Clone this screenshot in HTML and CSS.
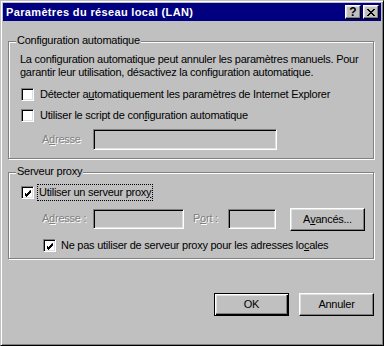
FILE: index.html
```html
<!DOCTYPE html>
<html lang="fr">
<head>
<meta charset="utf-8">
<title>Paramètres du réseau local (LAN)</title>
<link rel="stylesheet" href="styles.css">
</head>
<body>
<div class="window">
  <div class="titlebar">
    <span class="title">Paramètres du réseau local (LAN)</span>
    <div class="tbtns">
      <span class="tbtn help">?</span>
      <span class="tbtn close"><svg width="8" height="7" viewBox="0 0 8 7"><path d="M0 0h2v1h1v1h2v-1h1v-1h2v1h-1v1h-1v1h-1v1h1v1h1v1h1v1h-2v-1h-1v-1h-2v1h-1v1h-2v-1h1v-1h1v-1h1v-1h-1v-1h-1v-1h-1z" fill="#000"/></svg></span>
    </div>
  </div>
  <div class="content">
    <div class="group g1">
      <div class="legend">Configuration automatique</div>
      <p class="desc">La configuration automatique peut annuler les paramètres manuels. Pour<br>garantir leur utilisation, désactivez la configuration automatique.</p>
      <div class="row cb-row r1">
        <span class="cb"></span>
        <span class="lbl">Détecter a<u>u</u>tomatiquement les paramètres de Internet Explorer</span>
      </div>
      <div class="row cb-row r2">
        <span class="cb"></span>
        <span class="lbl">Utiliser le script de con<u>f</u>iguration automatique</span>
      </div>
      <div class="row field-row r3">
        <span class="dis lab1">A<u>d</u>resse</span>
        <span class="edit e1"></span>
      </div>
    </div>
    <div class="group g2">
      <div class="legend">Serveur proxy</div>
      <div class="row cb-row r4">
        <span class="cb"><svg width="7" height="7" viewBox="0 0 7 7"><path d="M6 0v3h-1v1h-1v1h-1v1h-1v1h-1v-1h-1v-1h-1v-3h1v1h1v1h1v-1h1v-1h1v-1z" fill="#000"/></svg></span>
        <span class="lbl focus">Utiliser un serveur prox<u>y</u></span>
      </div>
      <div class="row field-row r5">
        <span class="dis lab2">A<u>d</u>resse :</span>
        <span class="edit e2"></span>
        <span class="dis lab3">P<u>o</u>rt :</span>
        <span class="edit e3"></span>
        <span class="btn adv">A<u>v</u>ancés...</span>
      </div>
      <div class="row cb-row r6">
        <span class="cb"><svg width="7" height="7" viewBox="0 0 7 7"><path d="M6 0v3h-1v1h-1v1h-1v1h-1v1h-1v-1h-1v-1h-1v-3h1v1h1v1h1v-1h1v-1h1v-1z" fill="#000"/></svg></span>
        <span class="lbl">Ne pas utiliser de serveur proxy pour les adresses lo<u>c</u>ales</span>
      </div>
    </div>
    <div class="actions">
      <span class="btn default">OK</span>
      <span class="btn">Annuler</span>
    </div>
  </div>
</div>
</body>
</html>
```

FILE: styles.css
```css
* { box-sizing: border-box; }
html, body { margin: 0; padding: 0; background: #c0c0c0; }
body {
  font-family: "Liberation Sans", Arial, sans-serif;
  font-size: 11px;
  line-height: 13px;
  letter-spacing: -0.25px;
  color: #000;
}
.window {
  width: 384px;
  height: 346px;
  background: #c0c0c0;
  border: 1px solid;
  border-color: #c0c0c0 #000 #000 #c0c0c0;
  box-shadow: inset 1px 1px 0 #fff, inset -1px -1px 0 #808080;
  padding: 2px;
  display: flex;
  flex-direction: column;
}
.titlebar {
  height: 18px;
  background: #000080;
  display: flex;
  align-items: center;
  justify-content: space-between;
  padding: 0 2px 0 3px;
}
.title {
  color: #fff;
  font-weight: bold;
  font-size: 11px;
  letter-spacing: 0.35px;
}
.tbtns { display: flex; gap: 2px; }
.tbtn {
  width: 16px;
  height: 14px;
  background: #c0c0c0;
  border: 1px solid;
  border-color: #fff #000 #000 #fff;
  box-shadow: inset -1px -1px 0 #808080, inset 1px 1px 0 #dfdfdf;
  display: flex;
  align-items: center;
  justify-content: center;
  font-weight: bold;
  font-size: 12px;
  line-height: 12px;
  letter-spacing: 0;
}
.content {
  padding: 20px 7px 0 5px;
  display: flex;
  flex-direction: column;
  flex: 1;
}
.group {
  border: 1px solid #808080;
  box-shadow: inset 1px 1px 0 #fff, 1px 1px 0 #fff;
  display: flex;
  flex-direction: column;
}
.g1 { height: 118px; }
.g2 { height: 87px; margin-top: 13px; }
.legend {
  align-self: flex-start;
  margin: -8px 0 0 7px;
  padding: 0 1px;
  background: #c0c0c0;
}
.desc {
  margin: 6px 0 0 11px;
  white-space: nowrap;
}
.row { display: flex; align-items: center; }
.cb-row { padding-left: 12px; height: 13px; }
.r1 { margin-top: 9px; }
.r2 { margin-top: 8px; }
.r3 { margin-top: 7px; padding-left: 33px; }
.r4 { margin-top: 8px; }
.r5 { margin-top: 9px; padding-left: 33px; align-items: flex-start; height: 23px; }
.r6 { margin-top: 8px; padding-left: 34px; }
.cb {
  width: 13px;
  height: 13px;
  background: #fff;
  border: 1px solid;
  border-color: #808080 #fff #fff #808080;
  box-shadow: inset 1px 1px 0 #000, inset -1px -1px 0 #dfdfdf;
  display: flex;
  align-items: center;
  justify-content: center;
  padding: 1px 0 0 1px;
  flex: none;
}
.lbl { margin-left: 6px; white-space: nowrap; }
.r6 .lbl { margin-left: 5px; }
.focus {
  outline: 1px dotted #000;
  outline-offset: 0;
  padding: 1px 1px;
  margin-left: 4px;
}
.dis {
  color: #808080;
  text-shadow: 1px 1px 0 #fff;
  white-space: nowrap;
}
.r5 .dis { margin-top: 4px; }
.dis u { text-decoration-color: #808080; }
.edit {
  height: 21px;
  background: #c0c0c0;
  border: 1px solid;
  border-color: #808080 #fff #fff #808080;
  box-shadow: inset 1px 1px 0 #000, inset -1px -1px 0 #dfdfdf;
  flex: none;
}
.r5 .edit { height: 20px; margin-top: 1px; }
.lab1 { width: 51px; }
.e1 { width: 184px; }
.lab2 { width: 51px; }
.e2 { width: 91px; }
.lab3 { margin-left: 9px; width: 35px; }
.e3 { width: 48px; }
.btn {
  width: 75px;
  height: 23px;
  background: #c0c0c0;
  border: 1px solid;
  border-color: #fff #000 #000 #fff;
  box-shadow: inset -1px -1px 0 #808080, inset 1px 1px 0 #dfdfdf;
  display: flex;
  align-items: center;
  justify-content: center;
  flex: none;
}
.adv { margin-left: 14px; }
.btn.default {
  border: 1px solid #000;
  box-shadow: inset 1px 1px 0 #fff, inset -1px -1px 0 #000, inset -2px -2px 0 #808080, inset 2px 2px 0 #dfdfdf;
}
.actions {
  display: flex;
  justify-content: flex-end;
  gap: 10px;
  margin-top: 34px;
}
```
